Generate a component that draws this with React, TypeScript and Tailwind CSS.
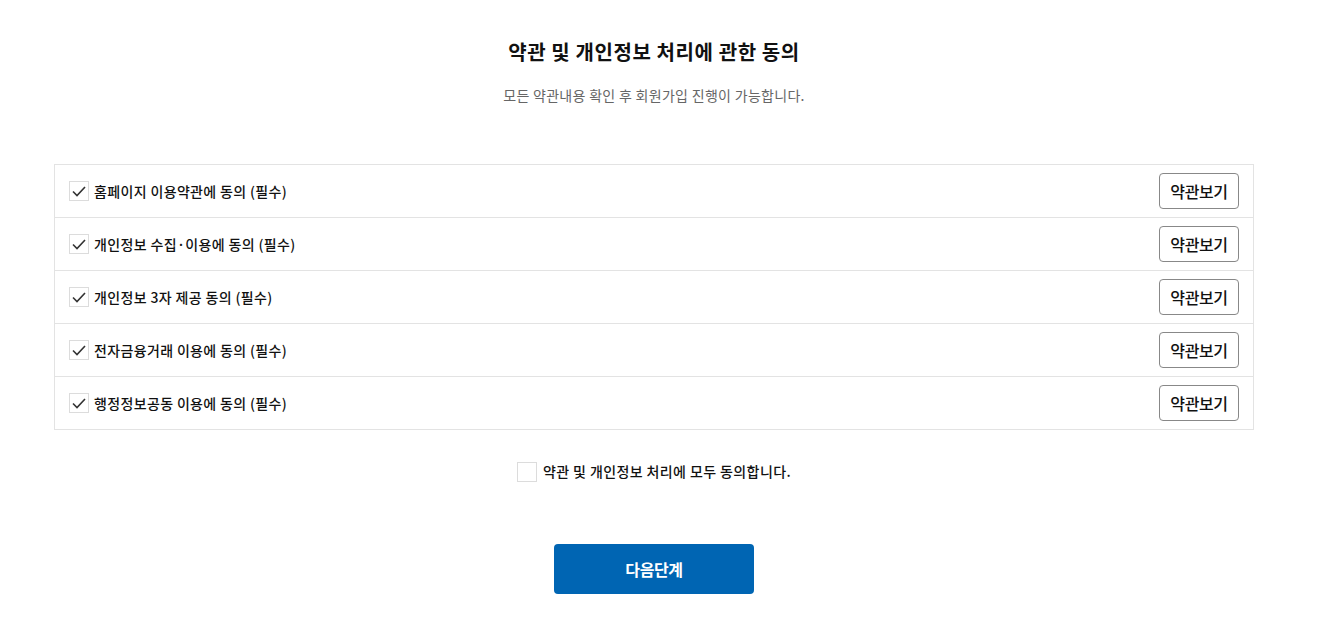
import { useState } from 'react'

const terms = [
  '홈페이지 이용약관에 동의 (필수)',
  '개인정보 수집·이용에 동의 (필수)',
  '개인정보 3자 제공 동의 (필수)',
  '전자금융거래 이용에 동의 (필수)',
  '행정정보공동 이용에 동의 (필수)',
]

function CheckBox({ checked }: { checked: boolean }) {
  return (
    <span className="w-5 h-5 border border-[#dcdcdc] bg-white flex items-center justify-center shrink-0">
      {checked && (
        <svg width="14" height="11" viewBox="0 0 14 11" fill="none">
          <path d="M1 5.5L5 9.5L13 1" stroke="#333" strokeWidth="1.6" />
        </svg>
      )}
    </span>
  )
}

export default function App() {
  const [checked, setChecked] = useState(terms.map(() => true))
  const [all, setAll] = useState(false)

  return (
    <div className="bg-white min-h-screen pr-[18px] font-['Noto_Sans_CJK_KR','Noto_Sans',sans-serif] text-[#111]">
      <div className="w-[1200px] mx-auto pt-[38px]">
        <h2 className="text-center text-[20px] font-bold leading-[28px] tracking-[0.6px]">
          약관 및 개인정보 처리에 관한 동의
        </h2>
        <p className="text-center text-[14px] text-[#666] mt-[19px] leading-[20px] tracking-[0.3px]">
          모든 약관내용 확인 후 회원가입 진행이 가능합니다.
        </p>

        <ul className="mt-[59px] border border-[#e3e3e3]">
          {terms.map((t, i) => (
            <li
              key={t}
              className="h-[53px] flex items-center justify-between pl-[14px] pr-[14px] border-b border-[#e3e3e3] last:border-b-0 last:h-[52px]"
            >
              <label
                className="flex items-center gap-[5px] cursor-pointer"
                onClick={() => setChecked(checked.map((c, j) => (j === i ? !c : c)))}
              >
                <CheckBox checked={checked[i]} />
                <span className="text-[14px] font-medium tracking-[0.35px]">{t}</span>
              </label>
              <button className="w-[80px] h-[36px] border border-[#888] rounded-[4px] text-[16px] font-medium tracking-[-0.4px] bg-white">
                약관보기
              </button>
            </li>
          ))}
        </ul>

        <div className="flex justify-center mt-[31px]">
          <label className="flex items-center gap-[6px] cursor-pointer" onClick={() => setAll(!all)}>
            <CheckBox checked={all} />
            <span className="text-[14px] font-medium tracking-[0.4px]">약관 및 개인정보 처리에 모두 동의합니다.</span>
          </label>
        </div>

        <div className="flex justify-center mt-[62px]">
          <button className="w-[200px] h-[50px] rounded-[4px] bg-[#0065b3] text-white text-[16px] font-bold tracking-[-0.4px]">
            다음단계
          </button>
        </div>
      </div>
    </div>
  )
}
